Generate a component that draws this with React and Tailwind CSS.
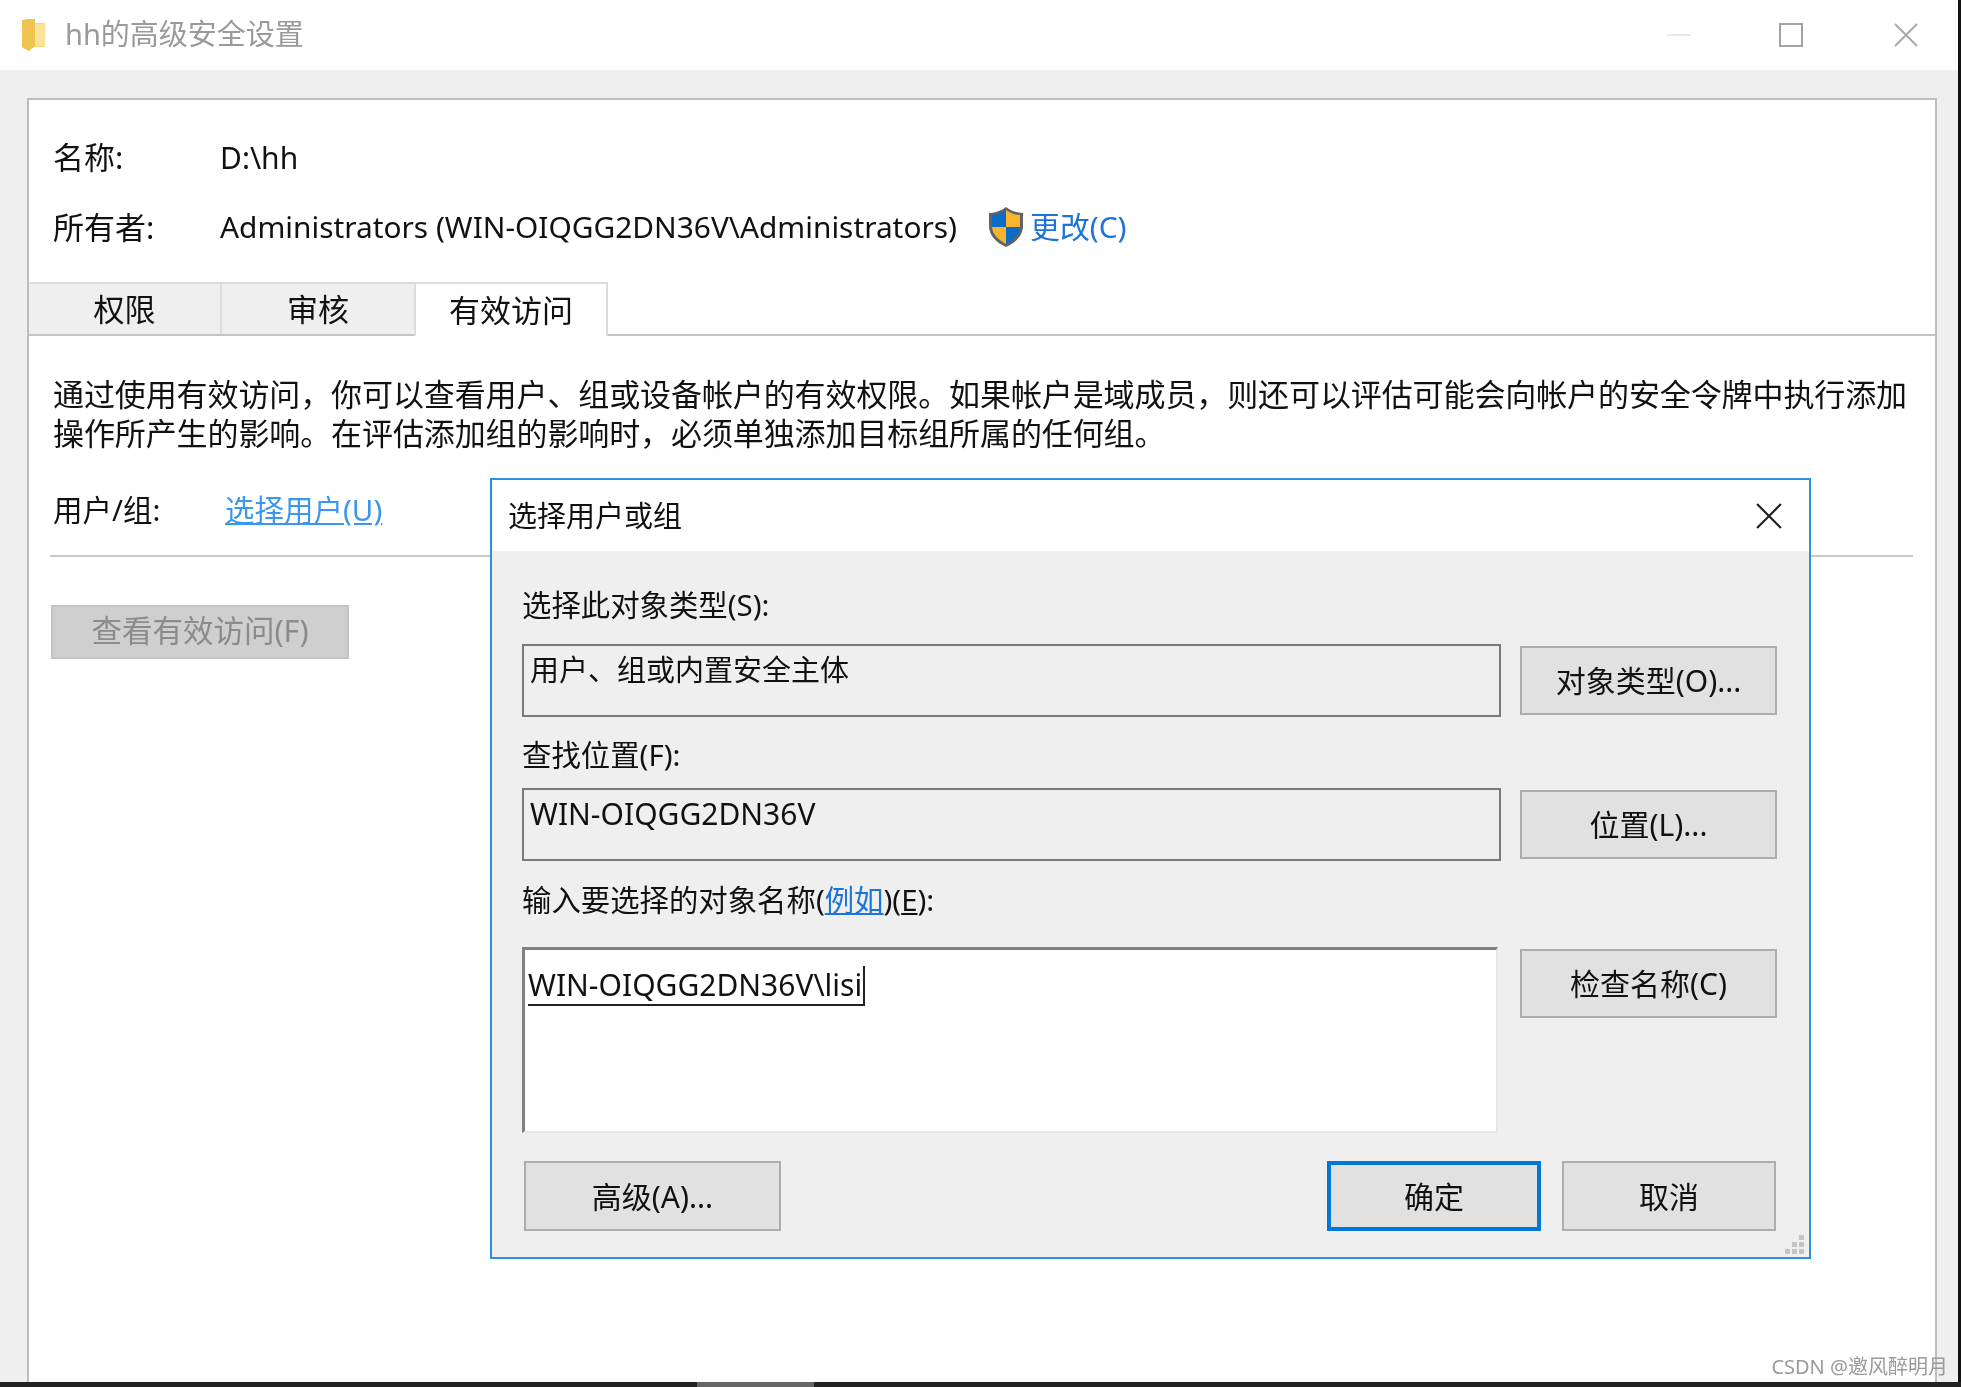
const font = "font-['Noto_Sans','Noto_Sans_CJK_SC',sans-serif]"

function FolderIcon() {
  return (
    <svg width="26" height="34" viewBox="0 0 26 34">
      <path d="M1 2 L14 1 L14 5 L24 5 L24 29 L8 29 L8 33 L1 29 Z" fill="#f6d67a" />
      <path d="M1 2 L8 1 L14 1 L14 28 L8 33 L1 29 Z" fill="#eec34f" />
      <path d="M14 6 L24 6 L24 28 L14 28 Z" fill="#fbe29b" />
    </svg>
  )
}

function Shield() {
  return (
    <svg width="38" height="42" viewBox="0 0 38 42">
      <path d="M19 1 C14 5 7 7 2 7 L2 20 C2 30 10 37 19 41 C28 37 36 30 36 20 L36 7 C31 7 24 5 19 1 Z" fill="#5f6468" />
      <path d="M19 4 C15 7 9 9 5 9 L5 21 L19 21 Z" fill="#0a6cc4" />
      <path d="M19 4 C23 7 29 9 33 9 L33 21 L19 21 Z" fill="#f7b42c" />
      <path d="M5 21 C5.5 29 12 34 19 38 L19 21 Z" fill="#f7b42c" />
      <path d="M33 21 C32.5 29 26 34 19 38 L19 21 Z" fill="#0a6cc4" />
    </svg>
  )
}

function CloseX({ size, color, width = 2 }) {
  return (
    <svg width={size} height={size} viewBox="0 0 24 24">
      <path d="M1 1 L23 23 M23 1 L1 23" stroke={color} strokeWidth={width} fill="none" />
    </svg>
  )
}

function Btn({ children, primary, className = '' }) {
  const border = primary ? 'border-[4px] border-[#0078d7]' : 'border-2 border-[#adadad]'
  return (
    <div className={`flex items-center justify-center bg-[#e1e1e1] text-[30px] text-[#111] ${border} ${className}`}>
      {children}
    </div>
  )
}

function Dialog() {
  return (
    <div className="absolute left-[490px] top-[478px] w-[1321px] h-[781px] border-2 border-[#2b90e0] bg-[#efefef] flex flex-col">
      <div className="h-[71px] shrink-0 bg-white flex items-center justify-between pl-[16px] pr-[27px] text-[29px] text-[#111]">
        <span>选择用户或组</span>
        <CloseX size={26} color="#222" />
      </div>
      <div className="flex flex-col pl-[30px] text-[29.4px] text-[#111]">
        <div className="h-[93px] flex items-center leading-none pt-[16px]">选择此对象类型(S):</div>
        <div className="flex items-center gap-[19px] h-[73px]">
          <div className="w-[979px] h-[73px] border-2 border-[#7a7a7a] pl-[6px] pt-[5px] text-[29px] leading-[38px]">用户、组或内置安全主体</div>
          <Btn className="w-[257px] h-[69px]">对象类型(O)...</Btn>
        </div>
        <div className="h-[71px] flex items-center pt-[6px]">查找位置(F):</div>
        <div className="flex items-center gap-[19px] h-[73px]">
          <div className="w-[979px] h-[73px] border-2 border-[#7a7a7a] pl-[6px] pt-[5px] text-[30px] leading-[38px]">WIN-OIQGG2DN36V</div>
          <Btn className="w-[257px] h-[69px]">位置(L)...</Btn>
        </div>
        <div className="h-[86px] flex items-start pt-[19px] leading-[40px]">
          <span>输入要选择的对象名称(<span className="text-[#1c74d8] underline">例如</span>)(<span className="underline">E</span>):</span>
        </div>
        <div className="flex items-start gap-[22px] h-[186px]">
          <div className="w-[976px] h-[186px] border-t-[3px] border-l-[3px] border-r-[2px] border-b-[2px] border-t-[#808080] border-l-[#808080] border-r-[#e6e6e6] border-b-[#e6e6e6] bg-white pl-[3px] pt-[16px] text-[30px] leading-[38px] text-[#111]">
            <span className="border-b-2 border-[#222] border-r-2 border-r-[#222] inline-block pr-px h-[40px]">WIN-OIQGG2DN36V\lisi</span>
          </div>
          <Btn className="w-[257px] h-[69px] mt-[2px]">检查名称(C)</Btn>
        </div>
        <div className="flex items-center mt-[28px] pl-[2px]">
          <Btn className="w-[257px] h-[70px]">高级(A)...</Btn>
          <Btn primary className="w-[214px] h-[70px] ml-[546px]">确定</Btn>
          <Btn className="w-[214px] h-[70px] ml-[21px]">取消</Btn>
        </div>
      </div>
      <div className="absolute right-[5px] bottom-[3px] grid grid-cols-3 gap-[2px]">
        <i className="w-[5px] h-[5px]" /><i className="w-[5px] h-[5px]" /><i className="w-[5px] h-[5px] bg-[#c4c4c4]" />
        <i className="w-[5px] h-[5px]" /><i className="w-[5px] h-[5px] bg-[#c4c4c4]" /><i className="w-[5px] h-[5px] bg-[#c4c4c4]" />
        <i className="w-[5px] h-[5px] bg-[#c4c4c4]" /><i className="w-[5px] h-[5px] bg-[#c4c4c4]" /><i className="w-[5px] h-[5px] bg-[#c4c4c4]" />
      </div>
    </div>
  )
}

export default function App() {
  return (
    <div className={`relative w-[1961px] h-[1387px] overflow-hidden bg-white blur-[0.5px] ${font}`}>
      <div className="flex h-[1382px]">
        <div className="w-[1958px] flex flex-col bg-[#efefef]">
          {/* title bar */}
          <div className="h-[70px] shrink-0 bg-white flex items-center pl-[21px] pr-[40px]">
            <FolderIcon />
            <span className="ml-[18px] mb-[2px] text-[29px] text-[#9a9a9a]">hh的高级安全设置</span>
            <div className="ml-auto w-[24px] h-[2px] bg-[#e8e8e8] mr-[88px]" />
            <div className="w-[24px] h-[24px] border-2 border-[#a3a3a3] mr-[91px]" />
            <CloseX size={24} color="#aaa" />
          </div>
          {/* main panel */}
          <div className="ml-[27px] mt-[28px] w-[1910px] flex-1 bg-white border-t-2 border-l-2 border-r-2 border-[#bdbdbd] flex flex-col text-[#111]">
            <div className="flex items-center h-[60px] mt-[27px] pl-[24px] text-[30px]">
              <span className="w-[167px] shrink-0 text-[31px]">名称:</span>
              <span>D:\hh</span>
            </div>
            <div className="flex items-center h-[60px] mt-[10px] pl-[24px] text-[29.85px]">
              <span className="w-[167px] shrink-0 text-[31px]">所有者:</span>
              <span>Administrators (WIN-OIQGG2DN36V\Administrators)</span>
              <span className="ml-[30px]"><Shield /></span>
              <span className="ml-[5px] text-[#1c74d8]">更改(C)</span>
            </div>
            {/* tabs */}
            <div className="flex h-[54px] mt-[25px] border-b-2 border-[#c4c4c4] text-[31px]">
              <div className="w-[193px] flex items-center justify-center bg-[#efefef] border-t-2 border-r-2 border-[#dcdcdc]">权限</div>
              <div className="w-[192px] flex items-center justify-center bg-[#efefef] border-t-2 border-[#dcdcdc]">审核</div>
              <div className="w-[194px] h-[54px] flex items-center justify-center bg-white border-t-2 border-l-2 border-r-2 border-[#dcdcdc]">有效访问</div>
            </div>
            <div className="pl-[24px] pr-[16px] pt-[39px] text-[31px] leading-[39px] tracking-[-0.1px]">
              通过使用有效访问，你可以查看用户、组或设备帐户的有效权限。如果帐户是域成员，则还可以评估可能会向帐户的安全令牌中执行添加操作所产生的影响。在评估添加组的影响时，必须单独添加目标组所属的任何组。
            </div>
            <div className="flex items-center h-[40px] mt-[37px] pl-[24px] text-[29.5px]">
              <span className="w-[172px] shrink-0">用户/组:</span>
              <span className="text-[#3b97ee] underline">选择用户(U)</span>
            </div>
            <div className="ml-[21px] mr-[22px] mt-[25px] h-[2px] bg-[#c8c8c8]" />
            <div className="ml-[22px] mt-[48px] w-[298px] h-[54px] pb-[2px] flex items-center justify-center bg-[#cfcfcf] border-2 border-[#c4c4c4] text-[30.5px] text-[#8b8b8b]">查看有效访问(F)</div>
          </div>
        </div>
        <div className="flex-1 bg-[#111]" />
      </div>
      {/* bottom strip */}
      <div className="flex h-[5px] bg-[#222]">
        <div className="ml-[697px] w-[117px] bg-[#666]" />
      </div>
      <Dialog />
      <div className="absolute right-[13px] bottom-[6px] text-[20px] leading-[28px] text-[#9a9a9a]">CSDN @邀风醉明月</div>
    </div>
  )
}
